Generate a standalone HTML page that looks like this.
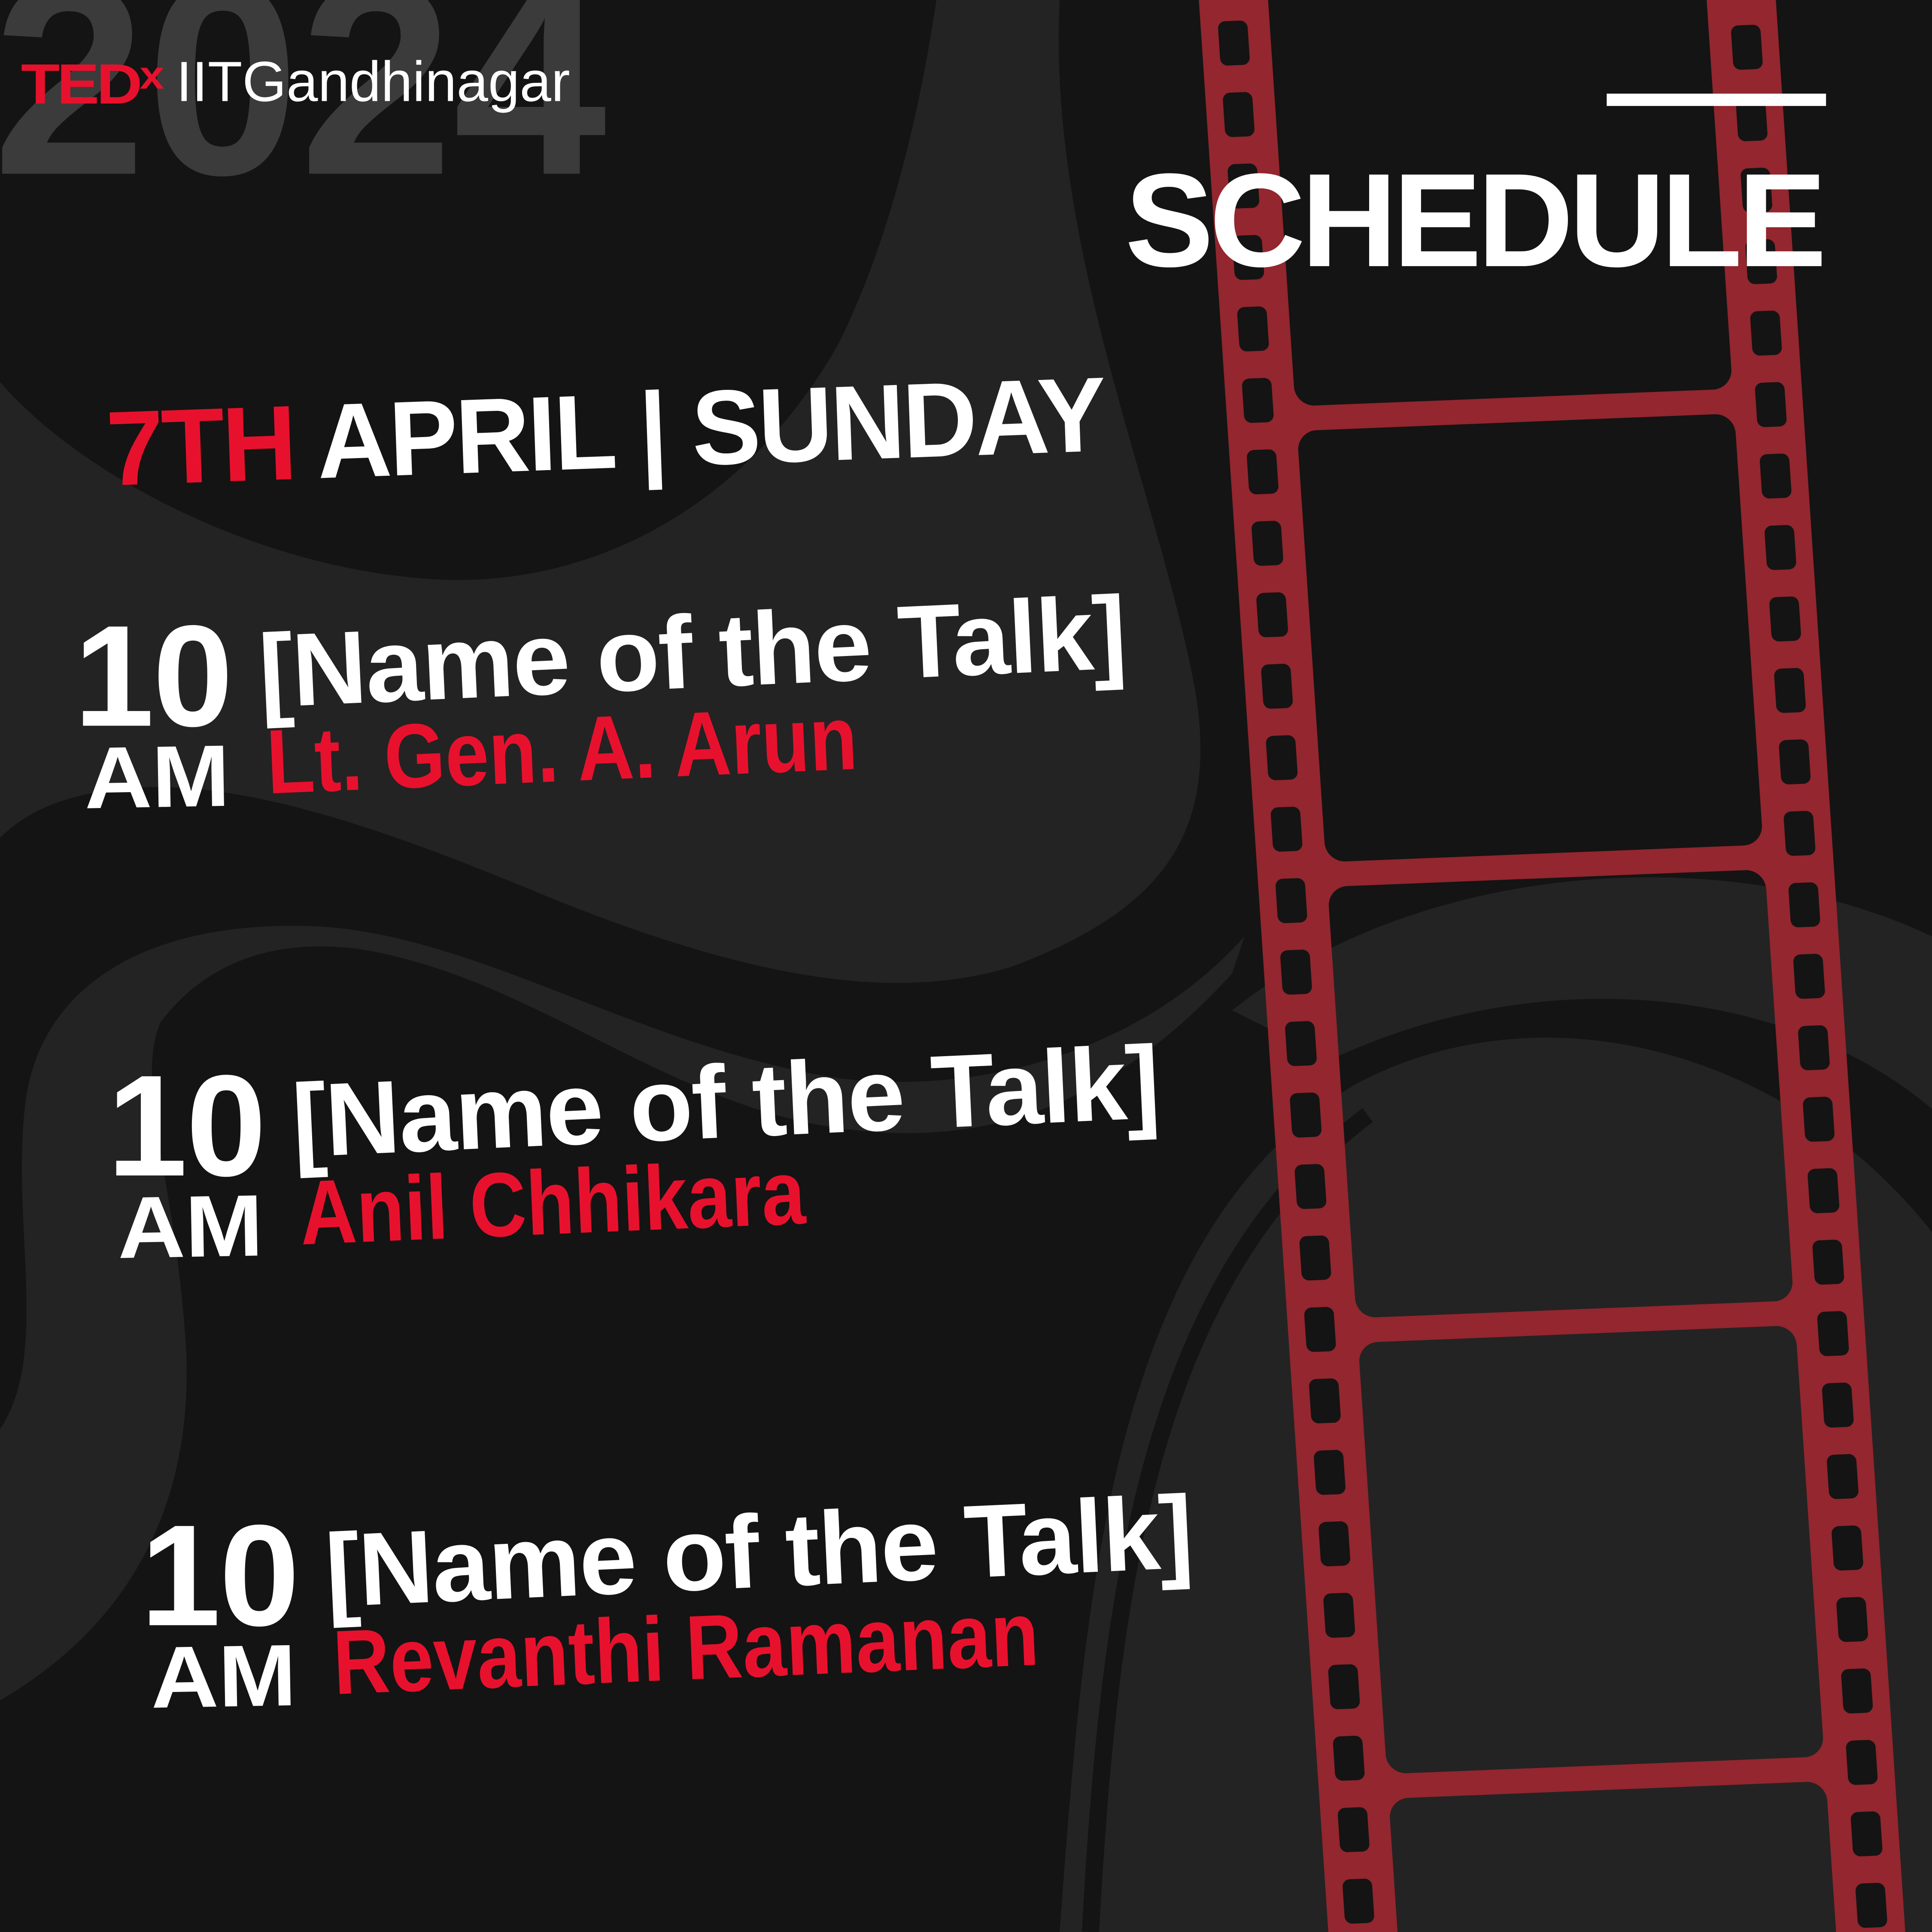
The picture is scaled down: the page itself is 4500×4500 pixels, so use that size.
<!DOCTYPE html>
<html><head><meta charset="utf-8">
<style>
html,body{margin:0;padding:0;background:#141414;overflow:hidden;width:4500px;height:4500px;}
body{position:relative;}
#c{position:absolute;left:0;top:0;width:1568px;height:1568px;transform:scale(2.869898);transform-origin:0 0;background:#141414;overflow:hidden;font-family:"Liberation Sans",sans-serif;}
.t{position:absolute;white-space:nowrap;font-weight:bold;line-height:1;transform-origin:0 100%;}
.w{color:#fff}.r{color:#e8112d}
</style></head><body>
<div id="c">
<svg width="1568" height="1568" style="position:absolute;left:0;top:0">
 <g fill="#232323">
  <path d="M0,310 C60,380 200,460 350,470 C470,478 600,420 680,280 C720,200 745,100 760,0 L860,0 C850,200 940,400 970,560 C990,680 940,740 820,785 C720,815 600,790 450,730 C330,680 200,630 100,640 C50,645 20,660 0,680 Z"/>
  <path d="M0,1380 C120,1310 160,1200 150,1080 C140,950 110,880 130,830 C160,790 210,760 290,770 C420,790 520,880 650,910 C790,940 900,900 1000,790 L1010,760 C930,850 800,890 680,875 C520,850 390,760 260,752 C120,745 30,800 20,900 C10,1000 40,1100 0,1160 Z"/>
  <path d="M860,1568 C880,1300 900,1000 1100,880 C1250,800 1450,850 1568,1000 L1568,1568 Z"/>
  <path d="M1000,820 C1150,700 1400,680 1568,760 L1568,900 C1450,800 1250,780 1080,860 Z"/>
 </g>
 <path d="M885,1568 C900,1300 930,1040 1110,905" stroke="#141414" stroke-width="14" fill="none"/>
 <text x="-6" y="141" font-family="Liberation Sans" font-weight="bold" font-size="224" fill="#3b3b3b">2024</text>
 <defs>
  <mask id="m" maskUnits="userSpaceOnUse" x="-200" y="-300" width="1200" height="2400">
   <rect x="-200" y="-300" width="1200" height="2400" fill="#fff"/>
   <g fill="#000">
    <rect x="56" y="-400" width="355" height="732" rx="16"/>
    <rect x="56" y="352" width="355" height="350" rx="16"/>
    <rect x="56" y="722" width="355" height="350" rx="16"/>
    <rect x="56" y="1092" width="355" height="350" rx="16"/>
    <rect x="56" y="1462" width="355" height="500" rx="16"/>
   </g>
  </mask>
 </defs>
 <g transform="matrix(1,-0.04,0.067,1,973,0)">
  <rect x="0" y="-100" width="467" height="1900" fill="#93262e" mask="url(#m)"/>
 </g>
</svg>
<svg width="1568" height="1568" style="position:absolute;left:0;top:0">
 <g transform="matrix(1,-0.04,0.067,1,973,0)" fill="#141414">
  <g id="hl"></g>
 </g>
</svg>
<script>
(function(){var g=document.getElementById('hl'),s='';for(var v=-40;v<1800;v+=58){s+='<rect x="14" y="'+v+'" width="24" height="36" rx="6"/><rect x="429" y="'+(v+20)+'" width="24" height="36" rx="6"/>';}g.innerHTML=s;})();
</script>

<div class="t r" style="left:17px;top:45px;font-size:46px;letter-spacing:-2px;transform:scaleX(1.12);transform-origin:0 0">TED<span style="font-size:32px;vertical-align:12px;letter-spacing:0">x</span></div>
<div class="t w" style="left:143px;top:43px;font-size:46px;font-weight:normal">IITGandhinagar</div>

<div style="position:absolute;left:1304px;top:76px;width:178px;height:10px;background:#fff"></div>
<div class="t w" style="left:913px;top:125px;font-size:108px;letter-spacing:-3.5px">SCHEDULE</div>

<div class="t" style="left:88px;top:322px;font-size:86px;transform:rotate(-2deg) scaleX(0.975);letter-spacing:-2px"><span class="r">7TH</span><span class="w"> APRIL | SUNDAY</span></div>

<div class="t w" style="left:60px;top:490px;font-size:117px;letter-spacing:-1px">10</div>
<div class="t w" style="left:212px;top:503px;font-size:84px;transform:rotate(-2.6deg);letter-spacing:-1px">[Name of the Talk]</div>
<div class="t w" style="left:69px;top:597px;font-size:71px;transform:rotate(-1deg) scaleX(1.07)">AM</div>
<div class="t r" style="left:218px;top:582px;font-size:74px;transform:rotate(-2.4deg) scaleX(0.86)">Lt. Gen. A. Arun</div>

<div class="t w" style="left:87px;top:855px;font-size:117px;letter-spacing:-1px">10</div>
<div class="t w" style="left:239px;top:868px;font-size:84px;transform:rotate(-2.6deg);letter-spacing:-1px">[Name of the Talk]</div>
<div class="t w" style="left:96px;top:962px;font-size:71px;transform:rotate(-1deg) scaleX(1.07)">AM</div>
<div class="t r" style="left:245px;top:948px;font-size:74px;transform:rotate(-2.4deg) scaleX(0.86)">Anil Chhikara</div>

<div class="t w" style="left:114px;top:1220px;font-size:117px;letter-spacing:-1px">10</div>
<div class="t w" style="left:266px;top:1233px;font-size:84px;transform:rotate(-2.6deg);letter-spacing:-1px">[Name of the Talk]</div>
<div class="t w" style="left:123px;top:1327px;font-size:71px;transform:rotate(-1deg) scaleX(1.07)">AM</div>
<div class="t r" style="left:272px;top:1313px;font-size:74px;transform:rotate(-2.4deg) scaleX(0.86)">Revanthi Ramanan</div>
</div>
</body></html>
